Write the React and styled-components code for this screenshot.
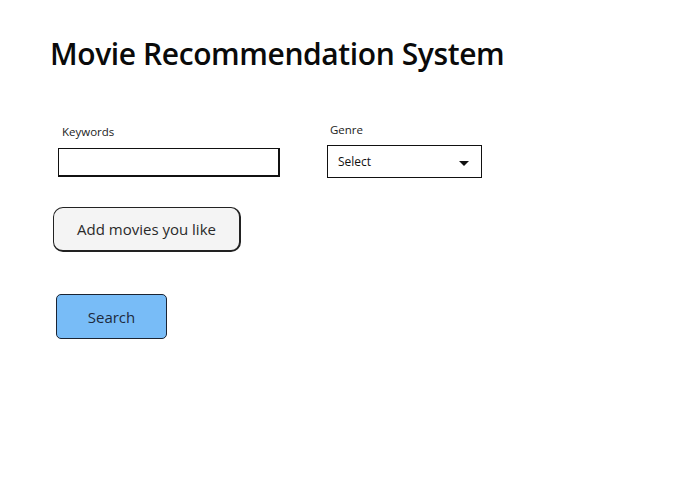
import React from "react";
import styled, { createGlobalStyle } from "styled-components";

const GlobalStyle = createGlobalStyle`
  body {
    margin: 0;
    background: #ffffff;
    font-family: "Open Sans", "Noto Sans", sans-serif;
    color: #111;
  }
`;

const Page = styled.div`
  width: 680px;
  height: 500px;
  box-sizing: border-box;
  padding: 34px 0 0 50px;
  display: flex;
  flex-direction: column;
`;

const Title = styled.h1`
  margin: 0;
  font-size: 30px;
  font-weight: 600;
  letter-spacing: -0.4px;
  line-height: 40px;
  color: #0a0a0a;
`;

const FieldRow = styled.div`
  display: flex;
  align-items: flex-start;
  margin-top: 50px;
`;

const Field = styled.div`
  display: flex;
  flex-direction: column;
  margin-left: ${(p) => p.offset}px;
  margin-top: ${(p) => p.top || 0}px;
`;

const Label = styled.label`
  font-size: 11.5px;
  color: #222;
  line-height: 15px;
  padding-left: ${(p) => p.indent}px;
  margin-bottom: ${(p) => p.gap}px;
`;

const TextInput = styled.div`
  width: 219px;
  height: 26px;
  border: 1px solid #111;
  border-bottom-width: 2px;
  border-right-width: 2px;
  background: #fff;
`;

const Select = styled.div`
  width: 155px;
  height: 33px;
  box-sizing: border-box;
  border: 1px solid #111;
  display: flex;
  align-items: center;
  justify-content: space-between;
  padding: 0 12px 0 10px;
  font-size: 12px;
  color: #111;
`;

const Caret = styled.span`
  width: 0;
  height: 0;
  border-left: 5px solid transparent;
  border-right: 5px solid transparent;
  border-top: 5px solid #111;
  margin-top: 3px;
`;

const AddButton = styled.button`
  margin: 29px 0 0 3px;
  width: 188px;
  height: 45px;
  box-sizing: border-box;
  border: 1px solid #222;
  border-right-width: 2px;
  border-bottom-width: 2px;
  border-radius: 10px;
  background: #f4f4f4;
  font-family: inherit;
  font-size: 15px;
  color: #2a2a2a;
  padding: 0;
`;

const SearchButton = styled.button`
  margin: 42px 0 0 6px;
  width: 111px;
  height: 45px;
  box-sizing: border-box;
  border: 1px solid #1b2433;
  border-radius: 5px;
  background: #78bcf7;
  font-family: inherit;
  font-size: 15px;
  color: #1d2a3d;
  padding: 0;
`;

export default function App() {
  return (
    <>
      <GlobalStyle />
      <Page>
        <Title>Movie Recommendation System</Title>
        <FieldRow>
          <Field offset={8} top={0}>
            <Label indent={4} gap={9}>Keywords</Label>
            <TextInput />
          </Field>
          <Field offset={47} top={-2}>
            <Label indent={3} gap={8}>Genre</Label>
            <Select>
              <span>Select</span>
              <Caret />
            </Select>
          </Field>
        </FieldRow>
        <AddButton>Add movies you like</AddButton>
        <SearchButton>Search</SearchButton>
      </Page>
    </>
  );
}
